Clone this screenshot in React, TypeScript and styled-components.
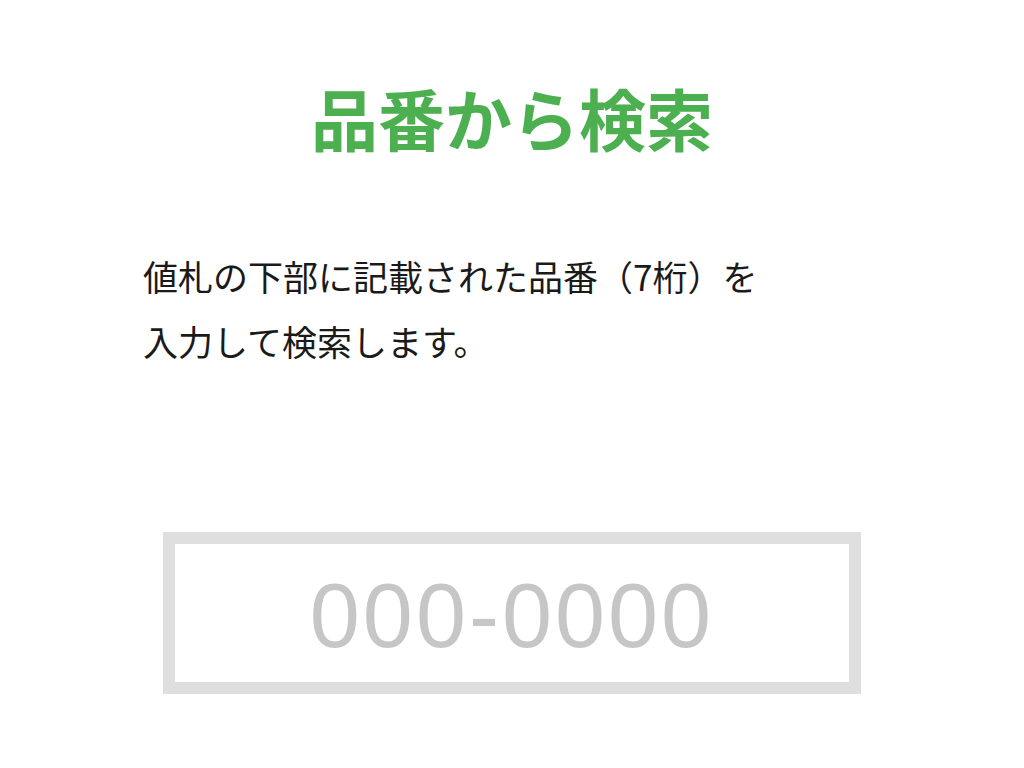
import React from "react";
import styled, { createGlobalStyle } from "styled-components";

const GlobalStyle = createGlobalStyle`
  html, body {
    margin: 0;
    padding: 0;
    background: #ffffff;
  }
  body {
    font-family: "Noto Sans CJK JP", "Noto Sans", sans-serif;
  }
`;

const Page = styled.main`
  display: flex;
  flex-direction: column;
  width: 1024px;
  min-height: 768px;
  padding-top: 77px;
  box-sizing: border-box;
`;

const Title = styled.h1`
  margin: 0;
  text-align: center;
  font-family: "Noto Sans CJK JP", sans-serif;
  font-size: 67px;
  line-height: 80px;
  font-weight: 700;
  color: #4caf50;
`;

const Description = styled.p`
  margin: 86px 0 0;
  padding: 0 143px;
  font-family: "Noto Sans CJK JP", sans-serif;
  font-size: 35px;
  line-height: 65px;
  font-weight: 400;
  color: #1a1a1a;
`;

const CodeInput = styled.input`
  display: block;
  margin: 159px 163px 0;
  width: 698px;
  height: 162px;
  box-sizing: border-box;
  border: 12px solid #dfdfdf;
  border-radius: 0;
  outline: none;
  background: #fff;
  text-align: center;
  font-family: "Liberation Sans", Arial, sans-serif;
  font-size: 90px;
  letter-spacing: 3px;
  color: #333;
  padding: 6px 0 0;
  &::placeholder {
    color: #c6c6c6;
  }
`;

export default function App() {
  return (
    <>
      <GlobalStyle />
      <Page>
        <Title>品番から検索</Title>
        <Description>
          値札の下部に記載された品番（7桁）を
          <br />
          入力して検索します。
        </Description>
        <CodeInput type="text" placeholder="000-0000" />
      </Page>
    </>
  );
}
